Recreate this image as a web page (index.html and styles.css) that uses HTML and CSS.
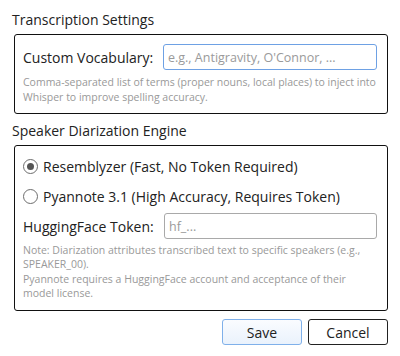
FILE: index.html
```html
<!DOCTYPE html>
<html>
<head>
    <meta charset="UTF-8">
    <title>Settings</title>
    <link rel="stylesheet" href="styles.css">
</head>
<body>
    <div class="dialog">
        <div class="group-title">Transcription Settings</div>
        <div class="group g1">
            <div class="row">
                <label class="lbl">Custom Vocabulary:</label>
                <input class="field focus" type="text" placeholder="e.g., Antigravity, O'Connor, ...">
            </div>
            <p class="hint">Comma-separated list of terms (proper nouns, local places) to inject into Whisper to improve spelling accuracy.</p>
        </div>

        <div class="group-title t2">Speaker Diarization Engine</div>
        <div class="group g2">
            <div class="radio-row">
                <span class="radio checked"></span>
                <span class="lbl">Resemblyzer (Fast, No Token Required)</span>
            </div>
            <div class="radio-row">
                <span class="radio"></span>
                <span class="lbl">Pyannote 3.1 (High Accuracy, Requires Token)</span>
            </div>
            <div class="row r2">
                <label class="lbl">HuggingFace Token:</label>
                <input class="field" type="text" placeholder="hf_...">
            </div>
            <p class="hint note">Note: Diarization attributes transcribed text to specific speakers (e.g., SPEAKER_00).<br>Pyannote requires a HuggingFace account and acceptance of their model license.</p>
        </div>

        <div class="buttons">
            <button class="btn save">Save</button>
            <button class="btn">Cancel</button>
        </div>
    </div>
</body>
</html>
```

FILE: styles.css
```css
* {
    margin: 0;
    padding: 0;
    box-sizing: border-box;
}
body {
    background: #fff;
    font-family: "Open Sans", "DejaVu Sans", sans-serif;
    font-size: 14px;
    color: #222;
}
.dialog {
    width: 400px;
    height: 356px;
    padding: 11px 12px 0 14px;
}
.group-title {
    margin-left: -2px;
    height: 23px;
    line-height: 18px;
}
.group-title.t2 {
    margin-top: 8px;
}
.group {
    border: 1px solid #111;
    border-radius: 3px;
    width: 374px;
    padding: 9px 10px 0 8px;
}
.g1 {
    height: 80px;
}
.g2 {
    height: 166px;
    padding-top: 5px;
}
.row {
    display: flex;
    align-items: center;
    gap: 7px;
}
.row .lbl {
    width: 133px;
}
.r2 .lbl {
    width: 134px;
}
.lbl {
    white-space: nowrap;
}
.field {
    flex: 1;
    min-width: 0;
    height: 26px;
    border: 1px solid #a9a9a9;
    border-radius: 3px;
    padding: 0 4px;
    font-family: inherit;
    font-size: 12.5px;
    color: #222;
    outline: none;
}
.field::placeholder {
    color: #9a9a9a;
}
.field.focus {
    border-color: #6ea1e4;
}
.hint {
    margin-top: 5px;
    font-size: 10.5px;
    line-height: 15px;
    color: #999;
}
.radio-row {
    display: flex;
    align-items: center;
    gap: 5px;
    height: 30px;
}
.radio {
    flex: none;
    width: 15px;
    height: 15px;
    border: 1px solid #6d6d6d;
    border-radius: 50%;
    display: flex;
    align-items: center;
    justify-content: center;
}
.radio.checked::after {
    content: "";
    width: 7px;
    height: 7px;
    border-radius: 50%;
    background: #555;
}
.r2 {
    margin-top: 2px;
}
.note {
    margin-top: 4px;
    line-height: 14.3px;
}
.buttons {
    display: flex;
    justify-content: flex-end;
    gap: 6px;
    margin-top: 8px;
}
.btn {
    width: 80px;
    height: 26px;
    border: 1px solid #222;
    border-radius: 3px;
    background: #fff;
    font-family: inherit;
    font-size: 14px;
    color: #222;
}
.btn.save {
    border-color: #7fb0ea;
    background: linear-gradient(#fafcff, #eaf2fc);
}
```
